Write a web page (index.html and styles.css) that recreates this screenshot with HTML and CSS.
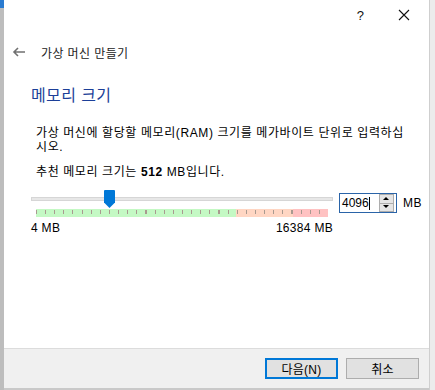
FILE: index.html
```html
<!DOCTYPE html>
<html lang="ko">
<head>
  <meta charset="UTF-8" />
  <meta name="viewport" content="width=device-width, initial-scale=1" />
  <title>가상 머신 만들기</title>
  <link rel="stylesheet" href="styles.css">
</head>
<body>

<div class="screen">
  <div class="edge-left"></div>

  <div class="dialog">
    <div class="titlebar">
      <span class="help">?</span>
      <svg class="close" width="12" height="12" viewBox="0 0 12 12">
        <path d="M1 1 L11 11 M11 1 L1 11" stroke="#111" stroke-width="1.1" fill="none" />
      </svg>
    </div>

    <div class="nav">
      <svg class="back" width="14" height="10" viewBox="0 0 14 10">
        <path d="M13 5 H2 M6 1 L2 5 L6 9" stroke="#707070" stroke-width="1.6" fill="none" />
      </svg>
      <span class="nav-title">가상 머신 만들기</span>
    </div>

    <div class="page">
      <h2 class="page-title">메모리 크기</h2>
      <p class="desc">가상 머신에 할당할 메모리(RAM) 크기를 메가바이트 단위로 입력하십<br>시오.</p>
      <p class="desc hint">추천 메모리 크기는 <b>512</b> MB입니다.</p>

      <div class="memory-row">
        <div class="slider-col">
          <div class="slider">
            <div class="track"></div>
            <div class="thumb"></div>
          </div>
          <div class="scale">
            <div class="zone ok"></div>
            <div class="zone warn"></div>
            <div class="zone bad"></div>
          </div>
          <div class="scale-labels">
            <span>4 MB</span>
            <span>16384 MB</span>
          </div>
        </div>

        <div class="spin">
          <span class="spin-value">4096<i class="caret"></i></span>
          <div class="spin-buttons">
            <span class="spin-btn up"></span>
            <span class="spin-btn down"></span>
          </div>
        </div>
        <span class="unit">MB</span>
      </div>
    </div>

    <div class="footer">
      <button class="btn primary">다음(N)</button>
      <button class="btn">취소</button>
    </div>
  </div>

  <div class="edge-right"></div>
</div>

</body>
</html>
```

FILE: styles.css
```css
body {
  margin: 0;
  font-family: 'Liberation Sans', 'Noto Sans CJK KR', sans-serif;
  font-size: 12px;
  color: #000;
  background: #c9c9c9;
}

.screen {
  width: 435px;
  height: 390px;
  display: flex;
  overflow: hidden;
}

.edge-left {
  width: 4px;
  flex: none;
  background: linear-gradient(#2b7bd0 0, #2b7bd0 8px, #bdbdbd 8px);
}

.edge-right {
  flex: 1;
  background: #ececec;
  border-left: 1px solid #cfcfcf;
}

.dialog {
  width: 425px;
  height: 388px;
  flex: none;
  background: #fff;
  display: flex;
  flex-direction: column;
}

.titlebar {
  height: 32px;
  display: flex;
  align-items: center;
  justify-content: flex-end;
  padding-right: 19px;
  gap: 34px;
}

.help {
  font-family: 'Liberation Sans', sans-serif;
  font-size: 13px;
  color: #111;
  margin-top: -2px;
}

.close {
  margin-top: -2px;
}

.nav {
  height: 40px;
  display: flex;
  align-items: center;
  padding-left: 8px;
}

.back {
  margin-right: 15px;
}

.nav-title {
  color: #222;
  font-size: 12px;
  letter-spacing: 0.4px;
}

.page {
  padding-left: 27px;
}

.page-title {
  margin: 14px 0 0;
  font-size: 16px;
  line-height: 20px;
  font-weight: normal;
  color: #1c3f98;
  letter-spacing: 0.4px;
}

.desc {
  margin: 20px 0 0 5px;
  line-height: 14px;
  letter-spacing: 0.6px;
}

.desc.hint {
  margin-top: 11px;
}

.memory-row {
  margin-top: 11px;
  display: flex;
  align-items: flex-start;
}

.slider-col {
  width: 302px;
}

.slider {
  position: relative;
  height: 18px;
}

.track {
  position: absolute;
  left: 0;
  right: 0;
  top: 7px;
  height: 2px;
  background: #e7e7e7;
  border: 1px solid #d6d6d6;
}

.thumb {
  position: absolute;
  left: 73px;
  top: 0;
  width: 11px;
  height: 18px;
  background: #0078d7;
  clip-path: polygon(0 0, 100% 0, 100% 70%, 50% 100%, 0 70%);
  border-radius: 1px 1px 0 0;
}

.scale {
  margin: 1px 5px 0;
  height: 8px;
  display: flex;
  position: relative;
}

.scale::after {
  content: "";
  position: absolute;
  left: 0;
  right: 0;
  top: 1px;
  height: 4px;
  background: repeating-linear-gradient(90deg, #a99a90 0, #a99a90 1px, transparent 1px, transparent 9.125px);
}

.zone.ok {
  width: 200px;
  background: #c4f9c4;
}

.zone.warn {
  width: 57px;
  background: #ffd6c3;
}

.zone.bad {
  flex: 1;
  background: #ffc2c2;
}

.scale-labels {
  margin-top: 4px;
  line-height: 14px;
  display: flex;
  justify-content: space-between;
  letter-spacing: 0.3px;
}

.spin {
  margin: 3px 0 0 6px;
  width: 54px;
  height: 18px;
  border: 1px solid #2a64a8;
  display: flex;
  align-items: center;
  justify-content: space-between;
  padding-left: 2px;
  box-sizing: content-box;
}

.spin-value {
  line-height: 14px;
  display: flex;
  align-items: center;
}

.caret {
  width: 1px;
  height: 13px;
  background: #000;
  margin-left: 0;
}

.spin-buttons {
  width: 13px;
  height: 16px;
  margin-right: 2px;
  display: flex;
  flex-direction: column;
  border: 1px solid #adadad;
  background: #e5e5e5;
}

.spin-btn {
  flex: 1;
  position: relative;
}

.spin-btn.up {
  border-bottom: 1px solid #adadad;
}

.spin-btn::after {
  content: "";
  position: absolute;
  left: 3px;
  top: 2px;
  border-left: 3px solid transparent;
  border-right: 3px solid transparent;
}

.spin-btn.up::after {
  border-bottom: 3px solid #000;
}

.spin-btn.down::after {
  top: 1px;
  border-top: 3px solid #000;
}

.unit {
  margin: 6px 0 0 6px;
  line-height: 14px;
  font-size: 12px;
  letter-spacing: 0.5px;
}

.footer {
  margin-top: auto;
  height: 40px;
  border-top: 1px solid #dcdcdc;
  background: #f0f0f0;
  display: flex;
  justify-content: flex-end;
  align-items: flex-start;
  gap: 8px;
  padding: 9px 10px 0 0;
  box-sizing: border-box;
}

.btn {
  width: 73px;
  height: 21px;
  font-family: 'Liberation Sans', 'Noto Sans CJK KR', sans-serif;
  font-size: 12px;
  color: #000;
  background: #e1e1e1;
  border: 1px solid #adadad;
  padding: 0;
  letter-spacing: 0.3px;
}

.btn.primary {
  border: 2px solid #0078d7;
}
```
